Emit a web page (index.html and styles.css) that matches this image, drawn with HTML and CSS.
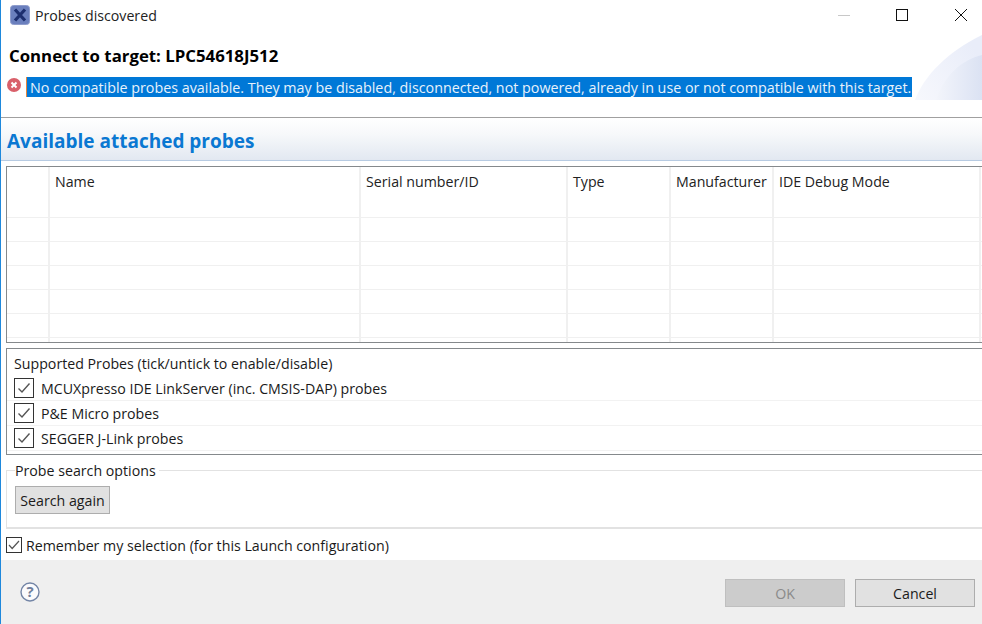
FILE: index.html
```html
<!DOCTYPE html>
<html lang="en">
<head>
<meta charset="utf-8">
<title>Probes discovered</title>
<link rel="stylesheet" href="styles.css">
</head>
<body>
<div class="window">
  <svg class="swoosh" width="70" height="66" viewBox="0 0 70 66">
    <defs>
      <linearGradient id="sw1" x1="0" y1="1" x2="1" y2="0.4"><stop offset="0" stop-color="#f7f8fd"/><stop offset="1" stop-color="#e9edf9"/></linearGradient>
      <linearGradient id="sw2" x1="0" y1="0" x2="1" y2="0"><stop offset="0" stop-color="#f3f5fb"/><stop offset="1" stop-color="#dbe2f3"/></linearGradient>
    </defs>
    <path d="M3 66C12 42 35 18 70 1V66Z" fill="url(#sw1)"/>
    <path d="M24 66C33 40 50 26 70 21V66Z" fill="url(#sw2)"/>
  </svg>
  <header class="titlebar">
    <svg class="app-icon" width="20" height="20" viewBox="0 0 20 20">
      <rect x="0.5" y="0.5" width="19" height="19" rx="3" fill="#6a7fbd" stroke="#8e9ccc"/>
      <path d="M5 4.5 15 15.5M15 4.5 5 15.5" stroke="#1d2f6f" stroke-width="3.2" fill="none"/>
    </svg>
    <span class="title">Probes discovered</span>
    <div class="window-controls">
      <span class="ctl ctl-min"></span>
      <span class="ctl ctl-max"></span>
      <svg class="ctl-close" width="12" height="12" viewBox="0 0 12 12"><path d="M0 0 12 12M12 0 0 12" stroke="#111" stroke-width="1" fill="none"/></svg>
    </div>
  </header>
  <section class="banner">
    <h1 class="target">Connect to target: LPC54618J512</h1>
    <div class="message">
      <svg class="err" width="14" height="14" viewBox="0 0 14 14">
        <circle cx="7" cy="7" r="7" fill="#d9606a"/>
        <path d="M4.5 4.5 9.5 9.5M9.5 4.5 4.5 9.5" stroke="#fff" stroke-width="2" fill="none"/>
      </svg>
      <span class="selected">No compatible probes available. They may be disabled, disconnected, not powered, already in use or not compatible with this target.</span>
    </div>
  </section>
  <h2 class="section-head">Available attached probes</h2>
  <div class="table">
    <div class="row head">
      <div class="cell"></div><div class="cell">Name</div><div class="cell">Serial number/ID</div><div class="cell">Type</div><div class="cell">Manufacturer</div><div class="cell">IDE Debug Mode</div>
    </div>
    <div class="row"><div class="cell"></div><div class="cell"></div><div class="cell"></div><div class="cell"></div><div class="cell"></div><div class="cell"></div></div>
    <div class="row"><div class="cell"></div><div class="cell"></div><div class="cell"></div><div class="cell"></div><div class="cell"></div><div class="cell"></div></div>
    <div class="row"><div class="cell"></div><div class="cell"></div><div class="cell"></div><div class="cell"></div><div class="cell"></div><div class="cell"></div></div>
    <div class="row"><div class="cell"></div><div class="cell"></div><div class="cell"></div><div class="cell"></div><div class="cell"></div><div class="cell"></div></div>
    <div class="row"><div class="cell"></div><div class="cell"></div><div class="cell"></div><div class="cell"></div><div class="cell"></div><div class="cell"></div></div>
    <div class="row"><div class="cell"></div><div class="cell"></div><div class="cell"></div><div class="cell"></div><div class="cell"></div><div class="cell"></div></div>
    <div class="row tail"><div class="cell"></div><div class="cell"></div><div class="cell"></div><div class="cell"></div><div class="cell"></div><div class="cell"></div></div>
  </div>
  <section class="supported">
    <div class="supported-title">Supported Probes (tick/untick to enable/disable)</div>
    <label class="probe"><span class="check big"><svg width="14" height="12" viewBox="0 0 14 12"><path d="M1.5 6.5 5 10 12.5 1.5" stroke="#555" stroke-width="1.4" fill="none"/></svg></span>MCUXpresso IDE LinkServer (inc. CMSIS-DAP) probes</label>
    <label class="probe"><span class="check big"><svg width="14" height="12" viewBox="0 0 14 12"><path d="M1.5 6.5 5 10 12.5 1.5" stroke="#555" stroke-width="1.4" fill="none"/></svg></span>P&amp;E Micro probes</label>
    <label class="probe"><span class="check big"><svg width="14" height="12" viewBox="0 0 14 12"><path d="M1.5 6.5 5 10 12.5 1.5" stroke="#555" stroke-width="1.4" fill="none"/></svg></span>SEGGER J-Link probes</label>
  </section>
  <fieldset class="search">
    <legend>Probe search options</legend>
    <button class="btn search-btn" type="button">Search again</button>
  </fieldset>
  <label class="remember"><span class="check small"><svg width="12" height="10" viewBox="0 0 12 10"><path d="M1 5 4.2 8.5 11 1" stroke="#555" stroke-width="1.2" fill="none"/></svg></span>Remember my selection (for this Launch configuration)</label>
  <footer class="footer">
    <svg class="help" width="20" height="20" viewBox="0 0 20 20">
      <circle cx="10" cy="10" r="9" fill="#fbfbfd" stroke="#7385a6" stroke-width="1.4"/>
      <text x="10" y="15" text-anchor="middle" class="help-q">?</text>
    </svg>
    <div class="actions">
      <button class="btn action disabled" type="button">OK</button>
      <button class="btn action" type="button">Cancel</button>
    </div>
  </footer>
</div>
</body>
</html>
```
FILE: styles.css
```css
* { box-sizing: border-box; }
html, body { margin: 0; padding: 0; background: #fff; }
body { font-family: "Open Sans", "Noto Sans", "Liberation Sans", sans-serif; font-size: 14.2px; color: #1a1a1a; }
.window { position: relative; width: 982px; height: 624px; overflow: hidden; background: #fff; border-left: 1px solid #1e88dc; display: flex; flex-direction: column; }
.swoosh { position: absolute; right: 0; top: 34px; }
.titlebar { height: 30px; display: flex; align-items: center; padding-left: 9px; flex: none; }
.app-icon { flex: none; }
.title { margin-left: 5px; color: #222; }
.window-controls { margin-left: auto; display: flex; align-items: center; padding-right: 15px; }
.ctl-min { width: 12px; height: 1px; background: #c8c8c8; margin-right: 46px; }
.ctl-max { width: 12px; height: 12px; border: 1px solid #111; margin-right: 47px; }
.ctl-close { display: block; }
.banner { height: 88px; flex: none; position: relative; border-bottom: 1px solid #a0a0a0; }
.target { margin: 0; padding: 16px 0 0 8px; height: 47px; font-size: 16.8px; line-height: 20px; font-weight: 700; color: #000; }
.message { display: flex; align-items: center; height: 20px; }
.err { margin-left: 6px; margin-top: -4px; flex: none; }
.selected { margin-left: 5px; height: 20px; width: 886px; font-size: 14.3px; line-height: 22px; background: #0078d7; color: #e8f2fb; padding-left: 3px; white-space: nowrap; overflow: hidden; border-left: 1px solid #e8863a; }
.section-head { margin: 0; height: 43px; flex: none; padding: 8px 0 0 6px; font-size: 19px; line-height: 30px; font-weight: 700; color: #0a78d2; background: linear-gradient(#fff, #f6f8fa 40%, #e2e8f1 100%); border-bottom: 1px solid #b7cbe2; }
.table { margin: 5px 0 0 5px; height: 177px; flex: none; border: 1px solid #85898c; border-right: 0; background: #fff; overflow: hidden; }
.row { display: grid; grid-template-columns: 43px 311px 207px 103px 103px 207px; height: 24px; border-bottom: 1px solid #f0f0f0; }
.row.head { height: 27px; border-bottom: 0; }
.row.tail { height: 5px; border-bottom: 0; }
.cell { border-right: 2px solid #f0f0f0; }
.row.head .cell { padding: 5px 0 0 5px; line-height: 20px; color: #222; white-space: nowrap; }
.supported { margin: 5px 0 0 5px; height: 107px; flex: none; border: 1px solid #85898c; border-right: 0; padding: 5px 0 0 7px; }
.supported-title { height: 22px; line-height: 20px; }
.probe { display: flex; align-items: center; height: 25px; border-bottom: 1px solid #f2f2f2; margin-left: -7px; padding-left: 7px; }
.check { display: flex; align-items: center; justify-content: center; flex: none; background: #fff; border: 1px solid #333; }
.check.big { width: 20px; height: 20px; margin-right: 7px; }
.check.small { width: 16px; height: 16px; margin-right: 4px; margin-top: -2px; }
.search { margin: 5px 0 0 5px; padding: 0 0 0 8px; height: 69px; flex: none; border: 2px solid #e2e2e2; border-width: 1px 0 2px 1px; min-width: 0; }
.search legend { padding: 2px 3px 0 0; margin-left: 0; line-height: 18px; }
.btn { font: inherit; color: #1a1a1a; background: #e1e1e1; border: 1px solid #adadad; padding: 0; }
.search-btn { display: block; width: 95px; height: 28px; margin-top: 6px; }
.remember { display: flex; align-items: center; height: 23px; margin: 5px 0 0 5px; flex: none; }
.footer { flex: none; margin-top: 3px; height: 64px; background: #efefef; display: flex; align-items: center; padding-left: 19px; }
.help { margin-top: -1px; flex: none; }
.help-q { font-size: 15px; font-weight: 700; fill: #6f7f9c; font-family: "Open Sans", sans-serif; }
.actions { margin-left: auto; display: flex; gap: 10px; padding-right: 7px; margin-top: 2px; }
.action { width: 120px; height: 28px; }
.action.disabled { background: #cccccc; color: #8a8a8a; border-color: #bfbfbf; }
```
